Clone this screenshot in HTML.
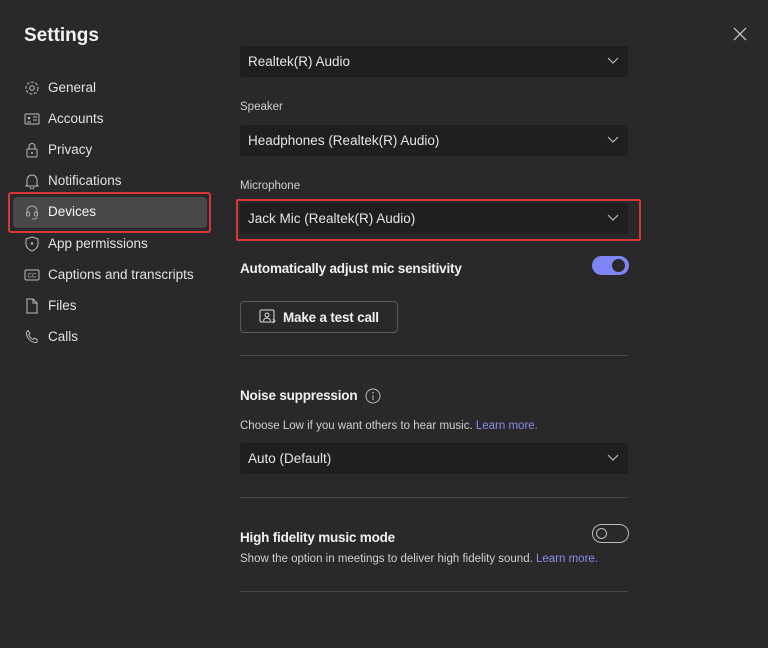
<!DOCTYPE html>
<html><head><style>
*{margin:0;padding:0;box-sizing:border-box}
body{width:768px;height:648px;background:#292929;font-family:"Liberation Sans",sans-serif;color:#e6e6e6;position:relative;overflow:hidden}
.a{position:absolute;white-space:nowrap}
.nav{font-size:13.5px;color:#e2e2e2}
.ic{position:absolute;left:24px;width:16px;height:16px}
.dd{position:absolute;left:240px;width:388px;height:31px;background:#1f1f1f;border-radius:3px;font-size:13.5px;color:#e6e6e6;padding:8px 8px}
.dd svg{position:absolute;right:9px;top:11px}
.lbl{font-size:11.5px;color:#d0d0d0}
.b{font-weight:bold;font-size:13.5px;color:#f0f0f0;letter-spacing:-0.2px}
.hr{position:absolute;left:240px;width:388px;height:1px;background:#474747}
.lk{color:#8b8ee8}
</style></head><body>
<div class="a" style="left:24px;top:25px;font-size:19px;font-weight:bold;color:#f2f2f2">Settings</div>
<svg class="a" style="left:733px;top:27px" width="14" height="14"><path d="M1 1L13 13M13 1L1 13" stroke="#bbb" stroke-width="1.3"/></svg>

<div class="a" style="left:13px;top:197px;width:194px;height:31px;background:#484848;border-radius:4px"></div>
<div class="a" style="left:8px;top:192px;width:203px;height:41px;border:2px solid #d9363c;border-radius:3px"></div>

<svg class="ic" style="top:80px" viewBox="0 0 16 16"><circle cx="8" cy="8" r="2.3" fill="none" stroke="#bbb"/><circle cx="8" cy="8" r="6" fill="none" stroke="#bbb" stroke-dasharray="3 1.5"/></svg>
<div class="a nav" style="left:48px;top:80px">General</div>
<svg class="ic" style="top:111px" viewBox="0 0 16 16"><rect x="1" y="3" width="14" height="10" rx="1" fill="none" stroke="#bbb"/><circle cx="5" cy="7" r="1.3" fill="#bbb"/><path d="M3 11h4M9 6h4M9 9h4" stroke="#bbb"/></svg>
<div class="a nav" style="left:48px;top:111px">Accounts</div>
<svg class="ic" style="top:142px" viewBox="0 0 16 16"><rect x="3" y="7" width="10" height="8" rx="1" fill="none" stroke="#bbb"/><path d="M5 7V4.5a3 3 0 0 1 6 0V7" fill="none" stroke="#bbb"/><circle cx="8" cy="11" r="1" fill="#bbb"/></svg>
<div class="a nav" style="left:48px;top:142px">Privacy</div>
<svg class="ic" style="top:173px" viewBox="0 0 16 16"><path d="M3 12V7a5 5 0 0 1 10 0v5l1 1H2z M6 14a2 2 0 0 0 4 0" fill="none" stroke="#bbb"/></svg>
<div class="a nav" style="left:48px;top:173px">Notifications</div>
<svg class="ic" style="top:204px" viewBox="0 0 16 16"><path d="M3 10V7a5 5 0 0 1 10 0v3M8 15h3a2 2 0 0 0 2-2" fill="none" stroke="#aaa"/><rect x="2.5" y="8" width="3" height="4" rx="1" fill="none" stroke="#aaa"/><rect x="10.5" y="8" width="3" height="4" rx="1" fill="none" stroke="#aaa"/></svg>
<div class="a nav" style="left:48px;top:204px;color:#f5f5f5">Devices</div>
<svg class="ic" style="top:236px" viewBox="0 0 16 16"><path d="M8 1L14 3v5c0 3.5-3 6-6 7-3-1-6-3.5-6-7V3z" fill="none" stroke="#bbb"/><circle cx="8" cy="7.5" r="1.2" fill="#bbb"/></svg>
<div class="a nav" style="left:48px;top:236px">App permissions</div>
<svg class="ic" style="top:267px" viewBox="0 0 16 16"><rect x="1" y="3" width="14" height="10" rx="1.5" fill="none" stroke="#bbb"/><text x="8" y="10.5" font-size="6" fill="#bbb" text-anchor="middle" font-family="Liberation Sans">CC</text></svg>
<div class="a nav" style="left:48px;top:267px">Captions and transcripts</div>
<svg class="ic" style="top:298px" viewBox="0 0 16 16"><path d="M3 1h6l4 4v10H3z M9 1v4h4" fill="none" stroke="#bbb"/></svg>
<div class="a nav" style="left:48px;top:298px">Files</div>
<svg class="ic" style="top:329px" viewBox="0 0 16 16"><path d="M4 1.5l2 3-1.2 1.5c.8 2 2.4 3.6 4.4 4.4L10.5 9l3 2-1 2.5c-5 .5-10.5-5-10-10z" fill="none" stroke="#bbb"/></svg>
<div class="a nav" style="left:48px;top:329px">Calls</div>

<div class="dd" style="top:46px">Realtek(R) Audio<svg width="12" height="8"><path d="M1 1l5 5 5-5" fill="none" stroke="#bbb" stroke-width="1.2"/></svg></div>
<div class="a lbl" style="left:240px;top:101px">Speaker</div>
<div class="dd" style="top:125px">Headphones (Realtek(R) Audio)<svg width="12" height="8"><path d="M1 1l5 5 5-5" fill="none" stroke="#bbb" stroke-width="1.2"/></svg></div>
<div class="a lbl" style="left:240px;top:180px">Microphone</div>
<div class="dd" style="top:203px">Jack Mic (Realtek(R) Audio)<svg width="12" height="8"><path d="M1 1l5 5 5-5" fill="none" stroke="#bbb" stroke-width="1.2"/></svg></div>
<div class="a" style="left:236px;top:199px;width:405px;height:42px;border:2px solid #d9363c;border-radius:2px"></div>

<div class="a b" style="left:240px;top:261px">Automatically adjust mic sensitivity</div>
<div class="a" style="left:592px;top:256px;width:37px;height:19px;border-radius:10px;background:#7f85f5"></div>
<div class="a" style="left:612px;top:259px;width:13px;height:13px;border-radius:50%;background:#292929"></div>

<div class="a" style="left:240px;top:301px;width:158px;height:32px;border:1px solid #5a5a5a;border-radius:4px"></div>
<svg class="a" style="left:259px;top:309px" width="18" height="16" viewBox="0 0 18 16"><rect x="1" y="1" width="14" height="12" rx="1.5" fill="none" stroke="#ddd"/><circle cx="8" cy="6" r="2" fill="none" stroke="#ddd"/><path d="M4.5 12c0-2 2-3 3.5-3s3.5 1 3.5 3M14 10l2 2-2 2" fill="none" stroke="#ddd"/></svg>
<div class="a b" style="left:283px;top:310px">Make a test call</div>
<div class="hr" style="top:355px"></div>

<div class="a b" style="left:240px;top:388px">Noise suppression</div>
<svg class="a" style="left:365px;top:388px" width="16" height="16"><circle cx="8" cy="8" r="7" fill="none" stroke="#bbb"/><path d="M8 7v5" stroke="#bbb"/><circle cx="8" cy="4.7" r=".8" fill="#bbb"/></svg>
<div class="a lbl" style="left:240px;top:420px">Choose Low if you want others to hear music. <span class="lk">Learn more.</span></div>
<div class="dd" style="top:443px">Auto (Default)<svg width="12" height="8"><path d="M1 1l5 5 5-5" fill="none" stroke="#bbb" stroke-width="1.2"/></svg></div>
<div class="hr" style="top:497px"></div>

<div class="a b" style="left:240px;top:530px">High fidelity music mode</div>
<div class="a" style="left:592px;top:524px;width:37px;height:19px;border-radius:10px;border:1px solid #bbb"></div>
<div class="a" style="left:596px;top:528px;width:11px;height:11px;border-radius:50%;border:1px solid #bbb"></div>
<div class="a lbl" style="left:240px;top:553px">Show the option in meetings to deliver high fidelity sound. <span class="lk">Learn more.</span></div>
<div class="hr" style="top:591px"></div>
</body></html>
